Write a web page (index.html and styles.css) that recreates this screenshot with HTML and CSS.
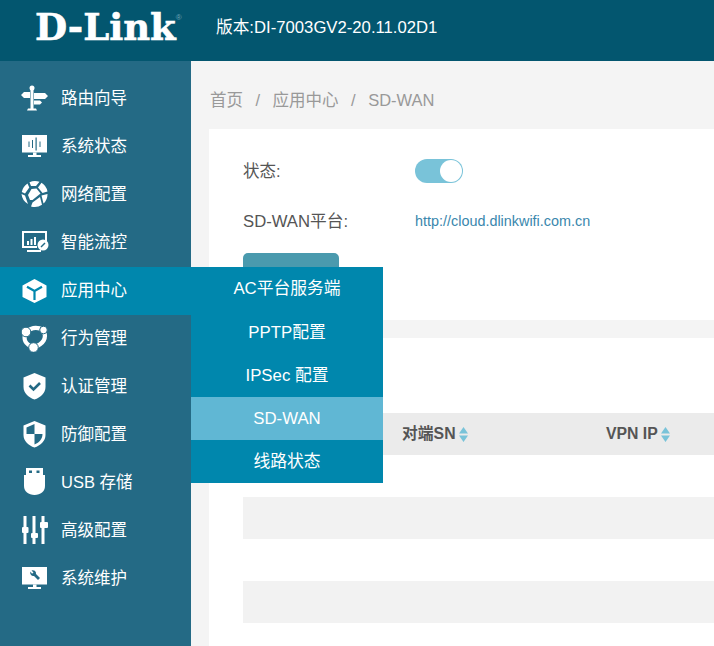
FILE: index.html
```html
<!DOCTYPE html>
<html lang="zh-CN">
<head>
<meta charset="utf-8">
<title>SD-WAN</title>
<link rel="stylesheet" href="styles.css">
</head>
<body>
<div class="app">
  <header class="header">
    <div class="logo">D-Link<sup class="reg">®</sup></div>
    <div class="version">版本:DI-7003GV2-20.11.02D1</div>
  </header>
  <div class="body">
    <nav class="side">
      <a class="item">
        <svg class="ico" viewBox="0 0 28 28"><rect x="9.500" y="3" width="3" height="23"/><circle cx="11" cy="4" r="2.500"/><path d="M7 24.500h8l1 2H6zM9 8H3L0 11l3 3h6zM13 9h11l3 3-3 3H13zM13 16.500h6l2 2-2 2h-6z"/></svg>
        <span>路由向导</span>
      </a>
      <a class="item">
        <svg class="ico" viewBox="0 0 28 28"><path fill-rule="evenodd" d="M1 3h25v17.500H1zM7.500 9.500v5.500h1V9.500zM11 8v8h1V8zM14.500 5.500v13h1.200v-13zM18.500 9.500v5.500h1V9.500z"/><path d="M12 20.500h3.500V23H20v2H7v-2h5z"/></svg>
        <span>系统状态</span>
      </a>
      <a class="item">
        <svg class="ico" viewBox="0 0 28 28"><path d="M8.500 2.200 A13 13 0 0 1 18.500 1.800 L15 6 10 6z M20.500 2.800 A13 13 0 0 1 26.500 11.500 L21.500 13 17 7.500z M6.500 3.500 L8.300 7.500 4 13.500 0.800 12 A13 13 0 0 1 6.500 3.500z M0.500 14 L4 15.500 7 24 A13 13 0 0 1 0.500 14z M7 15 L10.500 9 15.500 8.500 19.500 13.500 11.500 20 9 20z M26.500 14 A13 13 0 0 1 22.500 23.500 L20.500 15.500z M19 17 L21 24.800 A13 13 0 0 1 10 26.500 L11.500 22.500z"/></svg>
        <span>网络配置</span>
      </a>
      <a class="item">
        <svg class="ico" viewBox="0 0 28 28"><path fill-rule="evenodd" d="M1 3h25v10h-2V5H3v13h13v2H1z"/><path d="M6 13h2v4H6zM9.500 11h2v6h-2zM13 9h2v8h-2zM6 22h14v2H6z"/><circle cx="22" cy="17" r="5.500"/><path d="M20 19l4-4" stroke="#246a85" stroke-width="1.500"/></svg>
        <span>智能流控</span>
      </a>
      <a class="item active">
        <svg class="ico" viewBox="0 0 28 28"><path d="M13.500 3 25.500 9.500V21L13.500 27 1.500 21V9.500z"/><path d="M13.500 15V24M13.500 15 6 10.800M13.500 15l7.500-4.200" stroke="#0087ad" stroke-width="2.200" fill="none"/></svg>
        <span>应用中心</span>
      </a>
      <a class="item">
        <svg class="ico" viewBox="0 0 28 28"><path d="M5 8Q0 19 12.500 23.500M22.500 6Q28 18 12.500 23.500M5 8Q13 1 22.500 6" fill="none" stroke="#fff" stroke-width="4.200"/><circle class="ring" cx="5" cy="8" r="4.800"/><circle class="ring" cx="22.500" cy="6" r="3.800"/><circle class="ring" cx="12.500" cy="23.500" r="4.800"/></svg>
        <span>行为管理</span>
      </a>
      <a class="item">
        <svg class="ico" viewBox="0 0 28 28"><path d="M13.500 1 24.500 5.500V15c0 6-5 10.500-11 12.500C7.500 25.500 2.500 21 2.500 15V5.500z"/><path d="m8.500 13.500 4 4 6.500-6.500" stroke="#246a85" stroke-width="2.600" fill="none"/></svg>
        <span>认证管理</span>
      </a>
      <a class="item">
        <svg class="ico" viewBox="0 0 28 28"><path fill-rule="evenodd" d="M13.500 1 24.500 5.500V15c0 6-5 10.500-11 12.500C7.500 25.500 2.500 21 2.500 15V5.500zM13.500 4 5.500 7.500V14h8zM13.500 14v10.500c4-1.500 8-5 8-10.500z"/></svg>
        <span>防御配置</span>
      </a>
      <a class="item">
        <svg class="ico" viewBox="0 0 28 28"><path fill-rule="evenodd" d="M5 0h17v7H5zM8 2.500v2.500h3V2.500zM15.500 2.500v2.500h3V2.500z"/><path d="M3 7h21v11c0 5.500-4.500 9-10.500 9S3 23.500 3 18z"/></svg>
        <span>USB 存储</span>
      </a>
      <a class="item">
        <svg class="ico" viewBox="0 0 28 28"><path d="M2.500 0h3v28h-3zM11.500 0h3v28h-3zM20.500 0h3v28h-3z"/><rect x="1" y="11" width="6.500" height="6" rx="1"/><rect x="10" y="17" width="7" height="5" rx="1"/><rect x="19" y="6" width="8" height="6" rx="1"/></svg>
        <span>高级配置</span>
      </a>
      <a class="item">
        <svg class="ico" viewBox="0 0 28 28"><path d="M1 3h25v17.500H1z"/><path d="M12 20.500h3.500V23H20v2H7v-2h5z"/><path d="M9.500 7.500a3.200 3.200 0 0 0 3.500 4.500l4 4 2-2-4-4A3.200 3.200 0 0 0 10.500 6.500l2 2L11 9.800z" fill="#246a85"/></svg>
        <span>系统维护</span>
      </a>
      <div class="popup">
        <a class="pop-item">AC平台服务端</a>
        <a class="pop-item">PPTP配置</a>
        <a class="pop-item">IPSec 配置</a>
        <a class="pop-item current">SD-WAN</a>
        <a class="pop-item">线路状态</a>
      </div>
    </nav>
    <main class="main">
      <div class="crumbs"><span>首页</span><i>/</i><span>应用中心</span><i>/</i><span>SD-WAN</span></div>
      <section class="card top">
        <div class="row status">
          <label>状态:</label>
          <div class="switch"><span class="knob"></span></div>
        </div>
        <div class="row platform">
          <label>SD-WAN平台:</label>
          <a class="link">http://cloud.dlinkwifi.com.cn</a>
        </div>
        <button class="save" type="button"></button>
      </section>
      <section class="card table-card">
        <div class="thead">
          <div class="th first"></div>
          <div class="th sn">对端SN<svg class="sort" viewBox="0 0 9 15"><path d="M4.500 0 9 6.500H0zM0 8.500h9L4.500 15z"/></svg></div>
          <div class="th ip">VPN IP<svg class="sort" viewBox="0 0 9 15"><path d="M4.500 0 9 6.500H0zM0 8.500h9L4.500 15z"/></svg></div>
        </div>
        <div class="tr"></div>
        <div class="tr alt"></div>
        <div class="tr"></div>
        <div class="tr alt"></div>
      </section>
    </main>
  </div>
</div>
</body>
</html>
```

FILE: styles.css
```css
* { box-sizing: border-box; }
html, body { margin: 0; height: 100%; overflow: hidden; }
body {
  font-family: "Liberation Sans", "Noto Sans CJK SC", sans-serif;
  font-size: 16.500px;
  line-height: 20px;
  color: #555;
}
.app { width: 714px; height: 646px; display: flex; flex-direction: column; overflow: hidden; }
.header {
  height: 61px;
  flex: none;
  background: #03566f;
  display: flex;
  align-items: center;
  color: #fff;
}
.logo {
  width: 216px;
  padding-left: 35px;
  font-family: "DejaVu Serif", serif;
  font-weight: 700;
  font-size: 37px;
  line-height: 44px;
  white-space: nowrap;
  margin-top: -7px;
  -webkit-text-stroke: 0.6px #fff;
}
.reg { font-size: 8px; font-family: "Liberation Sans", sans-serif; font-weight: 400; vertical-align: 20px; line-height: 0; color: #6fa3b5; -webkit-text-stroke: 0; }
.version { font-size: 16.700px; margin-top: -6px; }
.body { flex: 1; display: flex; min-height: 0; }
.side {
  width: 191px;
  flex: none;
  background: #246a85;
  padding-top: 14px;
  position: relative;
  color: #fff;
}
.item {
  height: 48px;
  display: flex;
  align-items: center;
  padding: 0 0 2px 21px;
  gap: 12px;
  white-space: nowrap;
}
.item span { margin-bottom: 1px; }
.item.active { background: #0087ad; }
.ico { width: 28px; height: 28px; fill: #fff; flex: none; }
.ring { stroke: #246a85; stroke-width: 1; }
.popup {
  position: absolute;
  left: 191px;
  top: 206px;
  width: 192px;
  height: 216px;
  background: #0087ad;
  z-index: 2;
}
.pop-item {
  height: 43px;
  display: flex;
  align-items: center;
  justify-content: center;
  color: #fff;
  white-space: nowrap;
  font-size: 16.800px;
}
.pop-item:first-child { height: 44px; padding-bottom: 1px; }
.pop-item.current { background: #60b7d4; }
.main { flex: 1; background: #f4f4f4; padding-left: 18px; min-width: 0; }
.crumbs {
  height: 68px;
  padding: 29px 0 0 1px;
  color: #999;
  display: flex;
  gap: 12.500px;
}
.crumbs i { font-style: normal; }
.card { background: #fff; padding-left: 34px; }
.top { height: 191px; margin-bottom: 18px; padding-top: 28px; position: relative; }
.row { display: flex; align-items: center; }
.row label { width: 172px; flex: none; }
.status { height: 28px; }
.platform { height: 28px; margin-top: 22px; }
.platform label { font-size: 16.700px; padding-top: 1px; }
.switch {
  width: 48px;
  height: 24px;
  border-radius: 12px;
  background: #79c3d9;
  position: relative;
}
.knob {
  position: absolute;
  right: 1px;
  top: 1px;
  width: 22px;
  height: 22px;
  border-radius: 50%;
  background: #fff;
}
.link { font-size: 14.400px; color: #3a87ad; }
.save {
  display: block;
  width: 96px;
  height: 32px;
  margin-top: 18px;
  border: 0;
  border-radius: 5px;
  background: #4a9aae;
}
.table-card { padding-top: 75px; height: 320px; }
.thead { height: 42px; background: #ebebeb; display: flex; align-items: center; font-weight: 700; font-size: 15.800px; color: #555; }
.th { display: flex; align-items: center; gap: 3px; }
.first { width: 159px; }
.sn { width: 204px; }
.sort { width: 9px; height: 15px; fill: #79c3d9; }
.tr { height: 42px; }
.tr.alt { background: #f2f2f2; }
```
